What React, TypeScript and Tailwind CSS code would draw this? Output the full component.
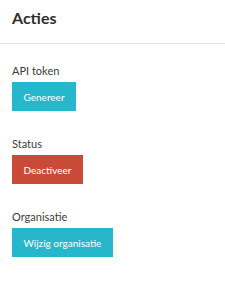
import React from 'react';

const font = { fontFamily: 'Lato, "Open Sans", sans-serif' };

const Action: React.FC<{ label: string; button: string; tone: 'teal' | 'red' }> = ({ label, button, tone }) => (
  <div className="flex flex-col items-start">
    <div className="text-[11px] leading-[13px] text-[#3d3d3d]">{label}</div>
    <button
      className={`mt-[5px] h-[29px] px-[11.5px] text-[10px] leading-[12px] text-white ${
        tone === 'red' ? 'bg-[#c94b37]' : 'bg-[#26b7cc]'
      }`}
    >
      {button}
    </button>
  </div>
);

export default function App() {
  return (
    <div className="min-h-[292px] w-[225px] bg-white" style={font}>
      <div className="h-[44px] border-b border-[#e6e6e6] px-3 pt-[8px]">
        <h1 className="text-[16px] font-bold leading-[20px] text-[#2e2e2e]">Acties</h1>
      </div>
      <div className="flex flex-col gap-[26px] px-3 pt-[20px]">
        <Action label="API token" button="Genereer" tone="teal" />
        <Action label="Status" button="Deactiveer" tone="red" />
        <Action label="Organisatie" button="Wijzig organisatie" tone="teal" />
      </div>
    </div>
  );
}
